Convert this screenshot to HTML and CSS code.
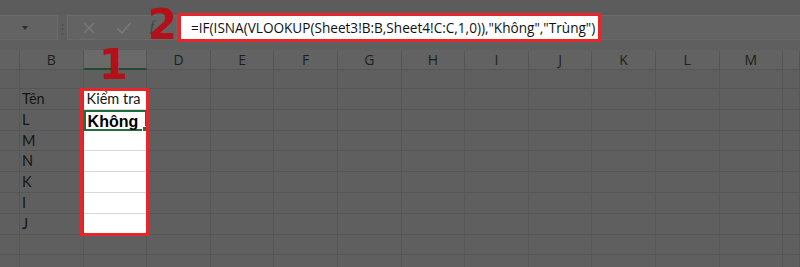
FILE: index.html
```html
<!DOCTYPE html>
<html lang="vi">
<head>
<meta charset="utf-8">
<title>Excel</title>
<link rel="stylesheet" href="styles.css">
</head>
<body>
<div class="app">
  <div class="ribbon"></div>
  <div class="fbar">
    <div class="namebox"><span class="caret"></span></div>
    <div class="grip">⋮</div>
    <div class="btns">
      <svg class="ico" width="14" height="14" viewBox="0 0 14 14"><path d="M2 2 L12 12 M12 2 L2 12" stroke="#7a7a7a" stroke-width="1.4" fill="none"/></svg>
      <svg class="ico" width="16" height="14" viewBox="0 0 16 14"><path d="M1.5 7.5 L6 12 L14.5 2" stroke="#7a7a7a" stroke-width="1.6" fill="none"/></svg>
      <span class="fx">f<sub>x</sub></span>
    </div>
    <div class="fline">
      <div class="formula">=IF(ISNA(VLOOKUP(Sheet3!B:B,Sheet4!C:C,1,0)),"Không","Trùng")</div>
    </div>
  </div>
  <div class="sheet">
    <div class="hd"></div><div class="hd">B</div><div class="hd sel">C</div><div class="hd">D</div><div class="hd">E</div><div class="hd">F</div><div class="hd">G</div><div class="hd">H</div><div class="hd">I</div><div class="hd">J</div><div class="hd">K</div><div class="hd">L</div><div class="hd">M</div><div class="hd"></div>

    <div class="c r1"></div><div class="c r1"></div><div class="c r1"></div><div class="c r1"></div><div class="c r1"></div><div class="c r1"></div><div class="c r1"></div><div class="c r1"></div><div class="c r1"></div><div class="c r1"></div><div class="c r1"></div><div class="c r1"></div><div class="c r1"></div><div class="c r1"></div>

    <div class="c"></div><div class="c">Tên</div><div class="c w">Kiểm tra</div><div class="c"></div><div class="c"></div><div class="c"></div><div class="c"></div><div class="c"></div><div class="c"></div><div class="c"></div><div class="c"></div><div class="c"></div><div class="c"></div><div class="c"></div>

    <div class="c"></div><div class="c">L</div><div class="c w act"><b>Không</b><span class="handle"></span></div><div class="c"></div><div class="c"></div><div class="c"></div><div class="c"></div><div class="c"></div><div class="c"></div><div class="c"></div><div class="c"></div><div class="c"></div><div class="c"></div><div class="c"></div>

    <div class="c"></div><div class="c">M</div><div class="c w"></div><div class="c"></div><div class="c"></div><div class="c"></div><div class="c"></div><div class="c"></div><div class="c"></div><div class="c"></div><div class="c"></div><div class="c"></div><div class="c"></div><div class="c"></div>

    <div class="c"></div><div class="c">N</div><div class="c w"></div><div class="c"></div><div class="c"></div><div class="c"></div><div class="c"></div><div class="c"></div><div class="c"></div><div class="c"></div><div class="c"></div><div class="c"></div><div class="c"></div><div class="c"></div>

    <div class="c"></div><div class="c">K</div><div class="c w"></div><div class="c"></div><div class="c"></div><div class="c"></div><div class="c"></div><div class="c"></div><div class="c"></div><div class="c"></div><div class="c"></div><div class="c"></div><div class="c"></div><div class="c"></div>

    <div class="c"></div><div class="c">I</div><div class="c w"></div><div class="c"></div><div class="c"></div><div class="c"></div><div class="c"></div><div class="c"></div><div class="c"></div><div class="c"></div><div class="c"></div><div class="c"></div><div class="c"></div><div class="c"></div>

    <div class="c"></div><div class="c">J</div><div class="c w"></div><div class="c"></div><div class="c"></div><div class="c"></div><div class="c"></div><div class="c"></div><div class="c"></div><div class="c"></div><div class="c"></div><div class="c"></div><div class="c"></div><div class="c"></div>

    <div class="c"></div><div class="c"></div><div class="c"></div><div class="c"></div><div class="c"></div><div class="c"></div><div class="c"></div><div class="c"></div><div class="c"></div><div class="c"></div><div class="c"></div><div class="c"></div><div class="c"></div><div class="c"></div>

    <div class="c"></div><div class="c"></div><div class="c"></div><div class="c"></div><div class="c"></div><div class="c"></div><div class="c"></div><div class="c"></div><div class="c"></div><div class="c"></div><div class="c"></div><div class="c"></div><div class="c"></div><div class="c"></div>
  </div>
  <div class="ann-rect"></div>
  <div class="num num1">1</div>
  <div class="num num2">2</div>
</div>
</body>
</html>
```

FILE: styles.css
```css
html, body {
  margin: 0;
  padding: 0;
  background: #5f5f5f;
  overflow: hidden;
}
.app {
  position: relative;
  width: 800px;
  height: 267px;
  overflow: hidden;
  font-family: Lato, "Open Sans", sans-serif;
}
.ribbon {
  height: 13px;
  background: #5c5c5c;
  border-bottom: 1px solid #595959;
}
.fbar {
  height: 36px;
  display: flex;
  align-items: flex-start;
  padding-top: 1px;
  box-sizing: border-box;
  background: #5f5f5f;
}
.namebox {
  width: 58px;
  height: 25px;
  background: #636363;
  border: 1px solid #6a6a6a;
  border-left: none;
  box-sizing: border-box;
  display: flex;
  align-items: center;
  padding-left: 22px;
}
.caret {
  width: 0;
  height: 0;
  border-left: 3.5px solid transparent;
  border-right: 3.5px solid transparent;
  border-top: 4px solid #2c2c2c;
}
.grip {
  width: 9px;
  height: 25px;
  display: flex;
  align-items: center;
  justify-content: center;
  color: #4c4c4c;
  font-size: 13px;
}
.btns {
  width: 110px;
  height: 25px;
  background: #636363;
  border: 1px solid #6a6a6a;
  box-sizing: border-box;
  display: flex;
  align-items: center;
  padding-left: 14px;
  gap: 20px;
}
.fx {
  font-family: "Liberation Serif", serif;
  font-style: italic;
  font-size: 15px;
  color: #404040;
  margin-left: -2px;
}
.fx sub {
  font-size: 9px;
}
.fline {
  flex: 1;
  height: 25px;
  margin-left: 3px;
  background: #636363;
  border: 1px solid #6a6a6a;
  border-right: none;
  box-sizing: border-box;
}
.formula {
  width: 417px;
  height: 23px;
  box-sizing: border-box;
  background: #ffffff;
  outline: 3px solid #e5262b;
  font-family: "Open Sans", sans-serif;
  font-size: 13.6px;
  line-height: 23px;
  color: #111;
  padding-left: 10px;
  white-space: nowrap;
}
.sheet {
  display: grid;
  grid-template-columns: 20px repeat(12, 63.6px) 1fr;
  grid-template-rows: 20px 19px repeat(9, 20.8px);
}
.hd {
  background: #626262;
  border-right: 1px solid #555555;
  border-bottom: 1px solid #575757;
  box-sizing: border-box;
  text-align: center;
  font-size: 14px;
  line-height: 20px;
  color: #1e1e1e;
  font-family: "Open Sans", sans-serif;
}
.hd.sel {
  background: #6a6a6a;
  border-bottom: 2px solid #1f4a2c;
}
.c {
  position: relative;
  border-right: 1px solid #565656;
  border-bottom: 1px solid #565656;
  box-sizing: border-box;
  font-size: 14.5px;
  line-height: 20px;
  color: #161616;
  padding-left: 2px;
  white-space: nowrap;
}
.c.w {
  background: #ffffff;
  border-right-color: #d8d8d8;
  border-bottom-color: #d8d8d8;
  padding-left: 3px;
}
.c.act {
  border: 2px solid #226b3c;
  padding-left: 2px;
}
.c.act b {
  font-family: "Liberation Sans", Arial, sans-serif;
  font-size: 16px;
  line-height: 18px;
  color: #000;
}
.handle {
  position: absolute;
  right: -4px;
  bottom: -4px;
  width: 5px;
  height: 5px;
  background: #226b3c;
  border: 1px solid #ffffff;
}
.ann-rect {
  position: absolute;
  left: 80px;
  top: 88px;
  width: 69px;
  height: 148px;
  box-sizing: border-box;
  border: 3px solid #e5262b;
}
.num {
  position: absolute;
  font-family: "DejaVu Sans", sans-serif;
  font-weight: bold;
  color: #b3111a;
  font-size: 42px;
  line-height: 1;
}
.num1 {
  left: 99px;
  top: 44px;
}
.num2 {
  left: 148px;
  top: 4px;
}
```
